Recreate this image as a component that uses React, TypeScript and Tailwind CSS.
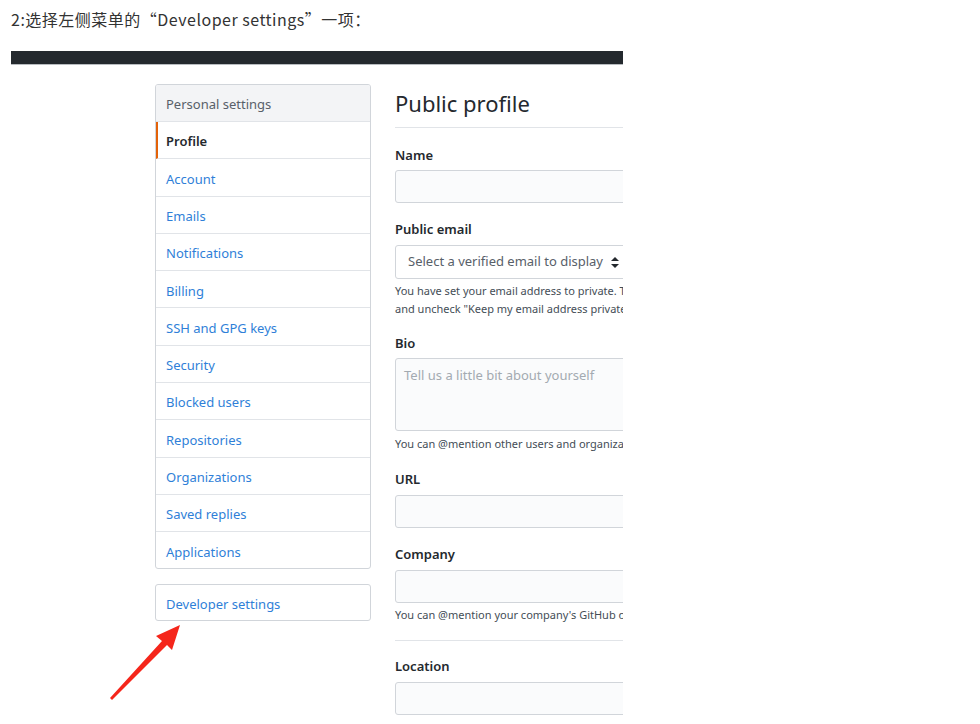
export default function App() {
    const menu = [
        "Account",
        "Emails",
        "Notifications",
        "Billing",
        "SSH and GPG keys",
        "Security",
        "Blocked users",
        "Repositories",
        "Organizations",
        "Saved replies",
    ]

    const shot = { fontFamily: '"Noto Sans", "Open Sans", sans-serif' }

    return (
        <div className="relative h-[724px] w-[980px] overflow-hidden bg-white">
            <p
                className="pl-[11px] pt-[9px] text-[16px] leading-[20px] tracking-[0.5px] text-[#333]"
                style={{ fontFamily: '"Noto Sans CJK SC", "Noto Sans", sans-serif' }}
            >
                2:选择左侧菜单的“Developer settings”一项：
            </p>

            {/* the screenshot */}
            <div className="ml-[11px] mt-[22px] h-[673px] w-[612px] overflow-hidden" style={shot}>
                <div className="h-[14px] border-b border-[#b8bcc0] bg-[#24292e]"></div>

                <div className="flex pl-[144px] pt-[19px]">
                    {/* sidebar */}
                    <div className="w-[216px] shrink-0">
                        <div className="overflow-hidden rounded-[3px] border border-[#d1d5da]">
                            <div className="flex h-[37px] items-center border-b border-[#e1e4e8] bg-[#f3f4f6] px-[10px] pt-[4px] text-[13px] text-[#586069]">
                                Personal settings
                            </div>
                            <div className="flex h-[37.3px] items-center border-b border-l-2 border-b-[#e1e4e8] border-l-[#e36209] pl-[8px] pt-[4px] text-[13px] font-semibold text-[#24292e]">
                                Profile
                            </div>
                            {menu.map((item) => (
                                <div
                                    key={item}
                                    className="flex h-[37.3px] items-center border-b border-[#e1e4e8] px-[10px] pt-[4px] text-[13px] text-[#2f7fd8]"
                                >
                                    {item}
                                </div>
                            ))}
                            <div className="flex h-[36px] items-center px-[10px] pt-[4px] text-[13px] text-[#2f7fd8]">
                                Applications
                            </div>
                        </div>

                        <div className="mt-[15px] flex h-[37px] items-center rounded-[3px] border border-[#d1d5da] px-[10px] pt-[4px] text-[13px] text-[#2f7fd8]">
                            Developer settings
                        </div>
                    </div>

                    {/* main */}
                    <div className="ml-[24px] w-[520px] shrink-0">
                        <div className="flex h-[44px] items-center border-b border-[#e1e4e8] pb-[4px] text-[22px] text-[#24292e]">
                            Public profile
                        </div>

                        <div className="mt-[18px] text-[13px] font-semibold leading-[18px] text-[#24292e]">Name</div>
                        <div className="mt-[6px] h-[33px] rounded-[3px] border border-[#d1d5da] bg-[#fafbfc]"></div>

                        <div className="mt-[17px] text-[13px] font-semibold leading-[18px] text-[#24292e]">Public email</div>
                        <div className="mt-[7px] flex h-[34px] w-[250px] items-center gap-[8px] rounded-[3px] border border-[#d1d5da] bg-white pl-[12px] text-[13px] text-[#586069]">
                            <span>Select a verified email to display</span>
                            <svg width="8" height="11" viewBox="0 0 8 11" fill="#24292e">
                                <path d="M4 0 L8 4 H0 Z" />
                                <path d="M0 7 H8 L4 11 Z" />
                            </svg>
                        </div>
                        <div className="mt-[3px] text-[11px] leading-[18px] text-[#444d56]">
                            <div>You have set your email address to private. To toggle your email privacy, go to email settings</div>
                            <div>and uncheck "Keep my email address private."</div>
                        </div>

                        <div className="mt-[16px] text-[13px] font-semibold leading-[18px] text-[#24292e]">Bio</div>
                        <div className="mt-[6px] h-[73px] rounded-[3px] border border-[#d1d5da] bg-[#fafbfc] px-[8px] pt-[7px] text-[13px] text-[#a3aab1]">
                            Tell us a little bit about yourself
                        </div>
                        <div className="mt-[4px] text-[11px] leading-[18px] text-[#444d56]">
                            You can @mention other users and organizations to link to them.
                        </div>

                        <div className="mt-[17px] text-[13px] font-semibold leading-[18px] text-[#24292e]">URL</div>
                        <div className="mt-[7px] h-[33px] rounded-[3px] border border-[#d1d5da] bg-[#fafbfc]"></div>

                        <div className="mt-[17px] text-[13px] font-semibold leading-[18px] text-[#24292e]">Company</div>
                        <div className="mt-[7px] h-[33px] rounded-[3px] border border-[#d1d5da] bg-[#fafbfc]"></div>
                        <div className="mt-[3px] text-[11px] leading-[18px] text-[#444d56]">
                            You can @mention your company's GitHub organization to link it.
                        </div>

                        <div className="mt-[16px] border-t border-[#e1e4e8]"></div>

                        <div className="mt-[16px] text-[13px] font-semibold leading-[18px] text-[#24292e]">Location</div>
                        <div className="mt-[7px] h-[33px] rounded-[3px] border border-[#d1d5da] bg-[#fafbfc]"></div>
                    </div>
                </div>
            </div>

            {/* red annotation arrow */}
            <svg className="absolute left-[100px] top-[615px]" width="90" height="95" viewBox="0 0 90 95">
                <path d="M10 83 L62 26 L56 21 L80 10 L72 35 L67 30 L12 85 Z" fill="#f5261b" />
            </svg>
        </div>
    )
}
